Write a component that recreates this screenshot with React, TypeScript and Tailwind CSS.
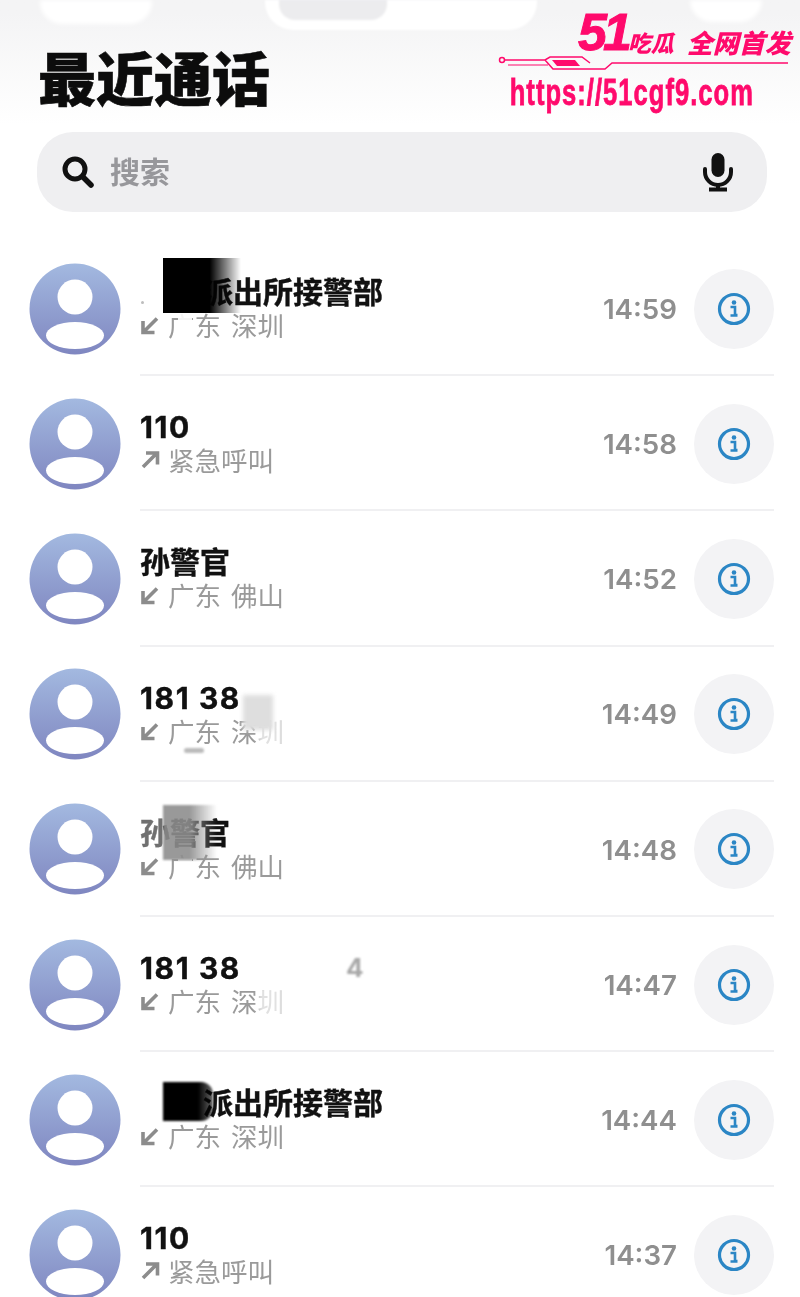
import React from 'react';

const cjk = "font-['Noto_Sans_CJK_SC','Noto_Sans',sans-serif]";
const nameFont = "font-['Inter','Noto_Sans_CJK_SC',sans-serif]";

type Call = {
  name: string;
  indent?: boolean;
  dir: 'in' | 'out';
  place: string;
  time: string;
  marks?: React.ReactNode;
};

// marks are the smudges somebody painted on the screenshot, they sit over the text
const calls: Call[] = [
  {
    name: '派出所接警部',
    indent: true,
    dir: 'in',
    place: '广东 深圳',
    time: '14:59',
    marks: (
      <>
        <div className="absolute left-[163px] top-[17px] h-[55px] w-[78px] bg-gradient-to-r from-black from-60% to-transparent" />
        <div className="absolute left-[178px] top-[72px] h-[32px] w-[14px] bg-white/90" />
        <div className="absolute left-[141px] top-[60px] h-[3px] w-[3px] rounded-full bg-[#bdbdbd]" />
      </>
    ),
  },
  { name: '110', dir: 'out', place: '紧急呼叫', time: '14:58' },
  { name: '孙警官', dir: 'in', place: '广东 佛山', time: '14:52' },
  {
    name: '181 38',
    dir: 'in',
    place: '广东 深圳',
    time: '14:49',
    marks: (
      <>
        <div className="absolute left-[258px] top-[70px] h-[32px] w-[26px] bg-white/70 blur-[2px]" />
        <div className="absolute left-[243px] top-[48px] h-[35px] w-[30px] bg-[#dedede] blur-[2px]" />
        <div className="absolute left-[184px] top-[101px] h-[5px] w-[20px] rounded-full bg-[#bbbbbb] blur-[1px]" />
      </>
    ),
  },
  {
    name: '孙警官',
    dir: 'in',
    place: '广东 佛山',
    time: '14:48',
    marks: (
      <>
        <div className="absolute left-[140px] top-[35px] h-[36px] w-[23px] bg-white/40" />
        <div className="absolute left-[178px] top-[76px] h-[26px] w-[14px] bg-white/80" />
        <div className="absolute left-[163px] top-[23px] h-[55px] w-[54px] bg-gradient-to-r from-[#8f8f8f]/90 from-50% to-transparent blur-[1px]" />
      </>
    ),
  },
  {
    name: '181 38',
    dir: 'in',
    place: '广东 深圳',
    time: '14:47',
    marks: (
      <>
        <div className="absolute left-[346px] top-[34px] font-['Inter',sans-serif] text-[26px] font-bold leading-[34px] text-[#a8a8a8] blur-[1px]">4</div>
        <div className="absolute left-[258px] top-[70px] h-[32px] w-[26px] bg-white/70 blur-[2px]" />
      </>
    ),
  },
  {
    name: '派出所接警部',
    indent: true,
    dir: 'in',
    place: '广东 深圳',
    time: '14:44',
    marks: (
      <div className="absolute left-[163px] top-[30px] h-[39px] w-[50px] rounded-r-xl bg-gradient-to-r from-black from-70% to-black/60 blur-[1px]" />
    ),
  },
  { name: '110', dir: 'out', place: '紧急呼叫', time: '14:37' },
];

function Avatar() {
  return (
    <svg width="92" height="92" viewBox="0 0 92 92" className="shrink-0">
      <defs>
        <linearGradient id="av" x1="0" y1="0" x2="0" y2="1">
          <stop offset="0" stopColor="#a3b9e0" />
          <stop offset="1" stopColor="#7f86c0" />
        </linearGradient>
      </defs>
      <circle cx="46" cy="46" r="45.5" fill="url(#av)" />
      <circle cx="46" cy="34" r="17.5" fill="#fff" />
      <ellipse cx="46" cy="72.5" rx="29" ry="13.5" fill="#fff" />
    </svg>
  );
}

function InfoButton() {
  return (
    <div className="flex h-[80px] w-[80px] shrink-0 items-center justify-center rounded-full bg-[#f3f3f5]">
      <svg width="34" height="34" viewBox="0 0 34 34" fill="none">
        <circle cx="17" cy="17" r="14.5" stroke="#2b86c5" strokeWidth="3.2" />
        <circle cx="17" cy="10.5" r="2.3" fill="#2b86c5" />
        <path d="M13.5 15h4.5v8h2.5M13.5 23.5h7" stroke="#2b86c5" strokeWidth="2.6" />
      </svg>
    </div>
  );
}

function CallArrow({ dir }: { dir: 'in' | 'out' }) {
  return (
    <svg width="20" height="20" viewBox="0 0 20 20" fill="none" className="mr-2 shrink-0">
      {dir === 'in' ? (
        <path d="M17 3.5 4 16.5M3 6v11.5h11.5" stroke="#8c8c8c" strokeWidth="3.6" />
      ) : (
        <path d="M3 17 16 4M6 3h11.5v11.5" stroke="#8c8c8c" strokeWidth="3.6" />
      )}
    </svg>
  );
}

function CallRow({ call }: { call: Call }) {
  const isNumber = /^\d/.test(call.name);
  return (
    <div className="relative flex h-[135.2px] items-center pl-[29px]">
      <Avatar />
      <div className="mr-[26px] ml-[19px] flex h-full min-w-0 flex-1 items-center border-b-2 border-[#f0f0f2] pt-[2px]">
        <div className="-mt-[3px] flex-1">
          <div
            className={`${nameFont} ${call.indent ? 'pl-[63px]' : ''} ${isNumber ? 'tracking-[1.6px]' : ''} text-[30px] leading-[36px] font-bold text-[#111] [-webkit-text-stroke:0.4px_#111]`}
          >
            {call.name}
          </div>
          <div className={`${cjk} flex items-center text-[26.5px] leading-[30px] text-[#9a9a9a] [word-spacing:4px]`}>
            <CallArrow dir={call.dir} />
            {call.place}
          </div>
        </div>
        <div className="mt-[2px] mr-[17px] font-['Inter',sans-serif] text-[27.7px] font-semibold text-[#8f8f8f]">{call.time}</div>
        <InfoButton />
      </div>
      {call.marks}
    </div>
  );
}

function Watermark() {
  return (
    <div className="absolute top-[8px] left-[498px] h-[106px] w-[300px] text-[#ff0a6c]">
      <div className="flex items-end pl-[80px]">
        <span className="font-['Liberation_Sans',sans-serif] text-[52px] leading-[49px] font-bold tracking-[-4px] italic [-webkit-text-stroke:1px_#ff0a6c]">51</span>
        <span className={`${cjk} mb-[1px] text-[23px] leading-[28px] font-black italic`}>吃瓜</span>
        <span className={`${cjk} mb-[1px] ml-[13px] text-[26px] leading-[28px] font-black italic`}>全网首发</span>
      </div>
      <svg width="300" height="20" viewBox="0 0 300 20" fill="none" className="absolute top-[46px] left-0">
        <circle cx="4" cy="6" r="2.5" stroke="#ff0a6c" strokeWidth="1.5" />
        <path d="M7 6H47L52 3H84L92 9M47 6L55 15H107L114 9H290" stroke="#ff0a6c" strokeWidth="1.5" />
        <path d="M10 11H50" stroke="#ff0a6c" strokeWidth="1.2" />
        <path d="M54 6H77L82 12H59z" fill="#ff0a6c" />
      </svg>
      <div className="mt-[17px] origin-left scale-x-[0.69] pl-[17px] font-['Liberation_Sans',sans-serif] text-[37px] leading-[38px] font-bold tracking-[1.5px] whitespace-nowrap [-webkit-text-stroke:0.8px_#ff0a6c]">
        https://51cgf9.com
      </div>
    </div>
  );
}

export default function App() {
  return (
    <div className="relative h-[1297px] w-[800px] overflow-hidden bg-white">
      <div className="blur-[0.5px]">
        <div className="h-[125px] bg-gradient-to-b from-[#f4f4f5] from-10% to-white">
          <div className="flex items-start">
            <div className="ml-[40px] h-[24px] w-[112px] rounded-b-[22px] bg-white blur-[2px]" />
            <div className="ml-[113px] h-[30px] w-[272px] rounded-b-[28px] bg-white pl-[14px] blur-[1px]">
              <div className="h-[20px] w-[108px] rounded-b-[16px] bg-[#ececee]" />
            </div>
            <div className="ml-[153px] h-[22px] w-[72px] rounded-b-[24px] bg-white blur-[2px]" />
          </div>
          <h1 className={`${cjk} mt-[12px] ml-[38px] text-[58px] leading-[68px] font-black text-[#0c0c0c] [-webkit-text-stroke:0.6px_#0c0c0c]`}>最近通话</h1>
        </div>
        <div className="mt-[7px] mr-[33px] ml-[37px] flex h-[80px] items-center rounded-[36px] bg-[#efeff1] pr-[33px] pl-[24px]">
          <svg width="34" height="34" viewBox="0 0 34 34" fill="none">
            <circle cx="14" cy="14" r="10" stroke="#111" strokeWidth="5" />
            <path d="M22 22l8 8" stroke="#111" strokeWidth="5.5" strokeLinecap="round" />
          </svg>
          <span className={`${cjk} -mt-[3px] ml-[15px] flex-1 text-[30px] font-semibold text-[#97979b]`}>搜索</span>
          <svg width="32" height="40" viewBox="0 0 32 40" fill="none">
            <rect x="9.5" y="1" width="13" height="24" rx="6.5" fill="#111" />
            <path d="M3 17v3a13 13 0 0 0 26 0v-3" stroke="#111" strokeWidth="4" strokeLinecap="round" />
            <path d="M16 33v4M7 37.5h18" stroke="#111" strokeWidth="4" />
          </svg>
        </div>
        <div className="pt-[29px]">
          {calls.map((call, i) => (
            <CallRow key={i} call={call} />
          ))}
        </div>
      </div>
      <Watermark />
    </div>
  );
}
